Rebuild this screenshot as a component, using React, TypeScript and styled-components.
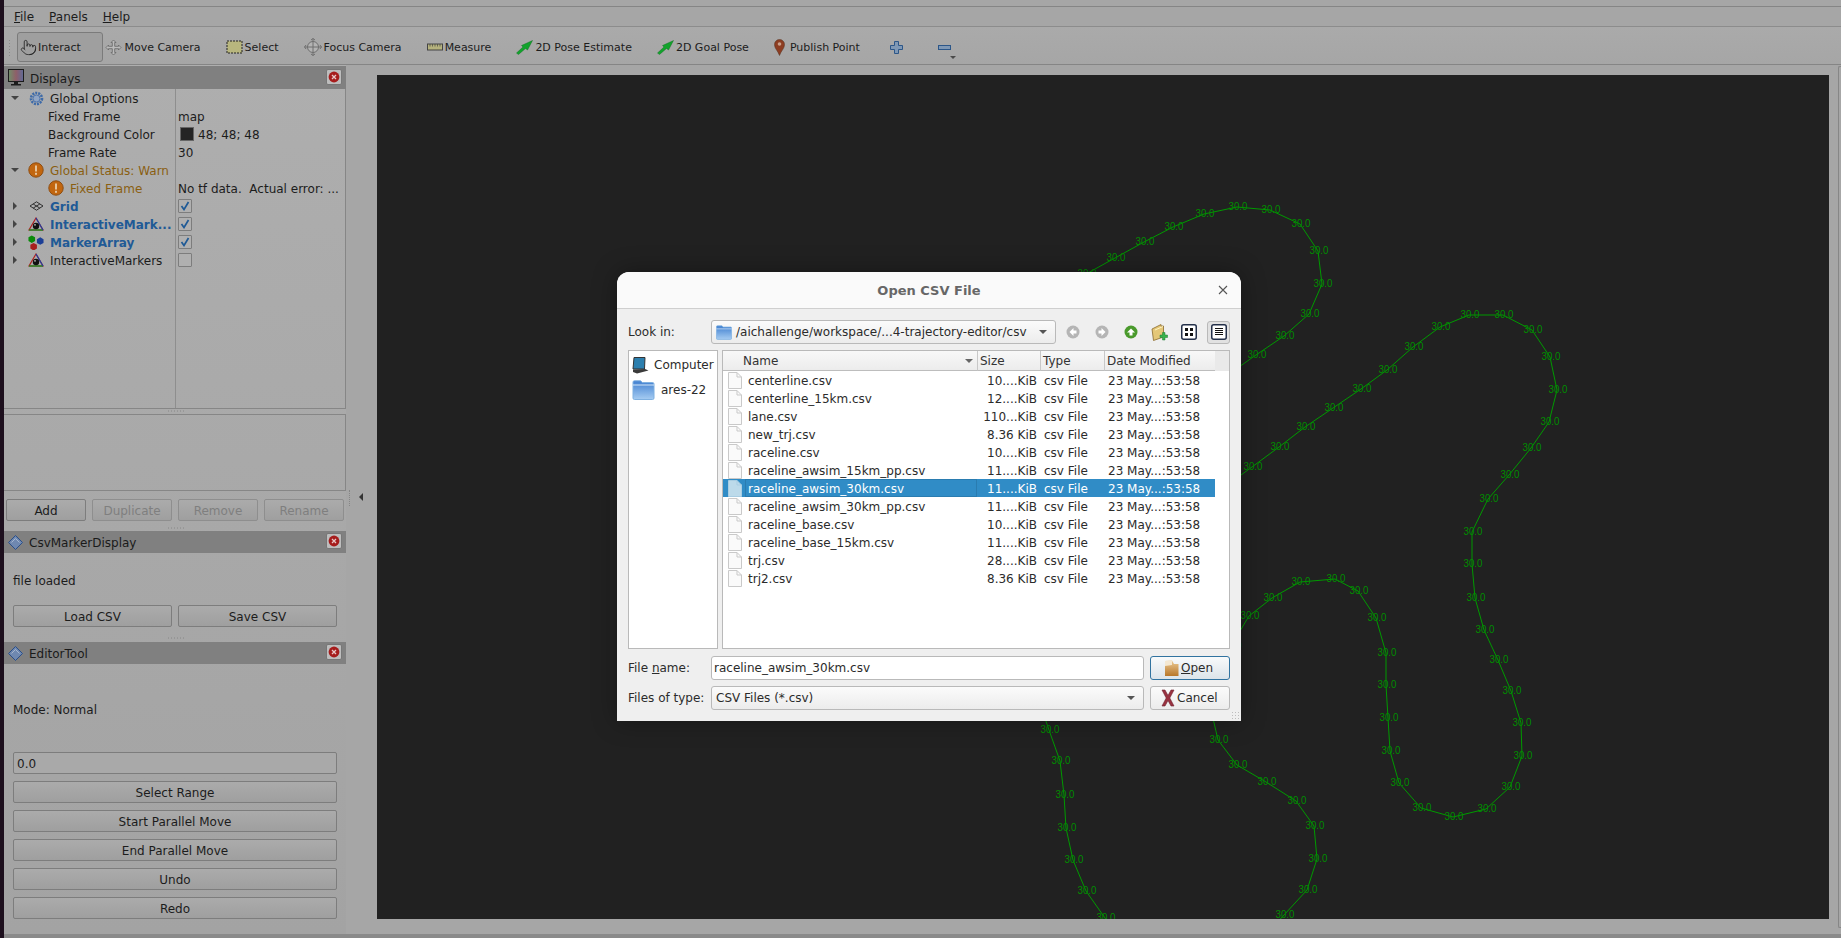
import { createGlobalStyle, styled } from 'styled-components';
import { Pointer } from 'lucide-react';

const GlobalStyle = createGlobalStyle`
  html, body {
    margin: 0;
    padding: 0;
    overflow: hidden;
    font-family: 'DejaVu Sans', sans-serif;
    font-size: 12px;
    color: #1c1c1c;
  }
`;

const Page = styled.div`
  position: relative;
  width: 1841px;
  height: 938px;
  display: flex;
  background: #a6a6a6;
  overflow: hidden;
`;
const DesktopStrip = styled.div`
  width: 4px;
  flex: none;
  background: #1d0f1d;
`;
const Main = styled.div`
  flex: 1;
  display: flex;
  flex-direction: column;
  min-width: 0;
`;
const TopBand = styled.div`
  height: 6px;
  border-bottom: 1px solid #858585;
`;
const MenuBar = styled.div`
  height: 17px;
  padding: 2px 0 0 10px;
  border-bottom: 1px solid #8c8c8c;
  display: flex;
  align-items: center;
  gap: 15px;
`;
const MenuItem = styled.span`
  line-height: 17px;
`;
const Mnemonic = styled.span`
  text-decoration: underline;
  text-underline-offset: 1px;
`;
const ToolBar = styled.div`
  height: 34px;
  padding-top: 3px;
  border-bottom: 1px solid #858585;
  background: linear-gradient(#aaaaaa, #a6a6a6);
  display: flex;
  align-items: center;
  position: relative;
  font-size: 11px;
`;
const Grip = styled.div`
  width: 4px;
  height: 17px;
  margin: 0 5px 0 4px;
  background-image: radial-gradient(#8a8a8a 0.8px, transparent 0.9px);
  background-size: 3px 3px;
`;
const ToolButton = styled.div<{ $active?: boolean }>`
  display: flex;
  align-items: center;
  height: 30px;
  box-sizing: border-box;
  gap: ${(p) => (p.$active ? 1 : 2)}px;
  padding: ${(p) => (p.$active ? '0 21px 0 2px' : '0 12.5px')};
  margin-right: ${(p) => (p.$active ? '-10px' : '0')};
  border: ${(p) => (p.$active ? '1px solid #7b7b7b' : 'none')};
  border-radius: 3px;
  background: ${(p) => (p.$active ? '#9f9f9f' : 'transparent')};
  white-space: nowrap;
`;
const ZoomButton = styled.div`
  width: 48px;
  height: 30px;
  flex: none;
  display: flex;
  align-items: center;
  justify-content: center;
  &:first-of-type {
    margin-left: -3px;
  }
`;
const MenuArrow = styled.div`
  position: absolute;
  left: 946px;
  top: 29px;
  width: 0;
  height: 0;
  border-left: 3px solid transparent;
  border-right: 3px solid transparent;
  border-top: 3px solid #4a4a4a;
`;

const Body = styled.div`
  flex: 1;
  display: flex;
  min-height: 0;
`;
const Sidebar = styled.div`
  width: 342px;
  flex: none;
  display: flex;
  flex-direction: column;
  padding-top: 1px;
  background: linear-gradient(#aeaeae, #a3a3a3);
`;
const PanelTitle = styled.div<{ $height: number }>`
  height: ${(p) => p.$height}px;
  flex: none;
  display: flex;
  align-items: center;
  gap: 6px;
  padding: 0 4px;
  background: #808080;
`;
const PanelName = styled.span`
  flex: 1;
  padding-top: 2px;
  font-size: 12px;
  color: #1a1a1a;
`;
const CloseButton = styled.div`
  width: 16px;
  height: 16px;
  box-sizing: border-box;
  border: 1px solid #777;
  border-radius: 2px;
  background: #bdbdbd;
  display: flex;
  align-items: center;
  justify-content: center;
  margin-top: -2px;
`;
const Tree = styled.div`
  height: 320px;
  flex: none;
  box-sizing: border-box;
  border-right: 1px solid #868686;
  border-bottom: 1px solid #868686;
  position: relative;
`;
const ColumnLine = styled.div`
  position: absolute;
  left: 171px;
  top: 0;
  bottom: 0;
  width: 1px;
  background: #8e8e8e;
`;
const TreeRow = styled.div`
  height: 18px;
  display: flex;
  align-items: center;
`;
const NameCell = styled.div<{ $indent: number }>`
  width: 171px;
  flex: none;
  display: flex;
  align-items: center;
  box-sizing: border-box;
  padding-left: ${(p) => p.$indent}px;
  white-space: nowrap;
  overflow: hidden;
`;
const Toggle = styled.div<{ $open?: boolean }>`
  width: 0;
  height: 0;
  flex: none;
  ${(p) =>
    p.$open
      ? `border-left: 4px solid transparent; border-right: 4px solid transparent; border-top: 4px solid #444; margin: 0 9px 0 7px;`
      : `border-top: 4px solid transparent; border-bottom: 4px solid transparent; border-left: 4px solid #444; margin: 0 11px 0 9px;`}
`;
const RowIcon = styled.div`
  width: 16px;
  height: 16px;
  flex: none;
  display: flex;
  align-items: center;
  justify-content: center;
  margin-right: 6px;
`;
const RowLabel = styled.span<{ $tone?: 'warn' | 'blue' }>`
  padding-top: 2px;
  color: ${(p) => (p.$tone === 'warn' ? '#8a5f12' : p.$tone === 'blue' ? '#1f5a96' : '#1c1c1c')};
  font-weight: ${(p) => (p.$tone === 'blue' ? 700 : 400)};
`;
const ValueCell = styled.div`
  flex: 1;
  min-width: 0;
  display: flex;
  align-items: center;
  gap: 4px;
  padding: 2px 0 0 3px;
  white-space: nowrap;
  overflow: hidden;
`;
const Swatch = styled.div`
  width: 12px;
  height: 12px;
  margin: -2px 0 0 2px;
  background: #242424;
  border: 0.5px solid #666;
`;
const CheckBox = styled.div`
  width: 14px;
  height: 14px;
  margin-top: -2px;
  box-sizing: border-box;
  border: 1px solid #7d7d7d;
  border-radius: 1px;
  background: #b0b0b0;
  display: flex;
  align-items: center;
  justify-content: center;
`;
const SplitDots = styled.div<{ $height: number; $top?: number }>`
  height: ${(p) => p.$height}px;
  flex: none;
  display: flex;
  justify-content: center;
  align-items: flex-start;
  box-sizing: border-box;
  padding-top: ${(p) => p.$top ?? 2}px;
  &::after {
    content: '';
    width: 17px;
    height: 2px;
    background-image: radial-gradient(#878787 0.7px, transparent 0.8px);
    background-size: 3px 2px;
  }
`;
const EmptyBox = styled.div`
  height: 77px;
  flex: none;
  box-sizing: border-box;
  border: 1px solid #868686;
  border-left: none;
  margin-bottom: 8px;
`;
const ButtonRow = styled.div<{ $pad: number }>`
  display: flex;
  gap: 6px;
  padding-left: ${(p) => p.$pad}px;
`;
const QtButton = styled.div<{ $width?: number; $disabled?: boolean }>`
  width: ${(p) => (p.$width ? `${p.$width}px` : 'auto')};
  height: 22px;
  flex: none;
  box-sizing: border-box;
  padding-top: 1px;
  display: flex;
  align-items: center;
  justify-content: center;
  border: 1px solid ${(p) => (p.$disabled ? '#8e8e8e' : '#7d7d7d')};
  border-radius: 2px;
  background: linear-gradient(#ababab, #9f9f9f);
  color: ${(p) => (p.$disabled ? '#7f7f7f' : '#1c1c1c')};
`;
const PanelLabel = styled.div<{ $height: number }>`
  height: ${(p) => p.$height}px;
  flex: none;
  box-sizing: border-box;
  padding: 3px 0 0 9px;
  display: flex;
  align-items: center;
`;
const ToolStack = styled.div`
  display: flex;
  flex-direction: column;
  gap: 7px;
  margin-left: 9px;
  width: 324px;
`;
const PanelInput = styled.div`
  height: 22px;
  box-sizing: border-box;
  border: 1px solid #7d7d7d;
  border-radius: 2px;
  background: #a9a9a9;
  padding: 1px 0 0 3px;
  display: flex;
  align-items: center;
`;
const CollapseStrip = styled.div`
  width: 31px;
  flex: none;
  box-sizing: border-box;
  padding: 425px 0 0 3px;
  display: flex;
  align-items: flex-start;
  gap: 8px;
`;
const DottedLine = styled.div`
  width: 1px;
  height: 16px;
  border-left: 1px dotted #858585;
`;
const CollapseArrow = styled.div`
  margin-top: 3px;
  width: 0;
  height: 0;
  border-top: 4px solid transparent;
  border-bottom: 4px solid transparent;
  border-right: 4px solid #333;
`;
const CanvasArea = styled.div`
  width: 1452px;
  flex: none;
  margin: 10px 0 15px;
  background: #212121;
`;
const TrackSvg = styled.svg`
  display: block;
  width: 1452px;
  height: 844px;
`;
const TrackLabel = styled.text`
  font-family: 'Liberation Sans', sans-serif;
  font-size: 11px;
  fill: #008c00;
`;
const RightDock = styled.div`
  flex: 1;
  padding: 1px 0 6px 9px;
  display: flex;
`;
const RightLine = styled.div`
  width: 2px;
  border-left: 1px solid #868686;
  border-top: 1px solid #868686;
  border-bottom: 1px solid #868686;
  border-radius: 2px 0 0 2px;
`;
const BottomBar = styled.div`
  height: 4px;
  background: #8a8a8a;
`;

const Dialog = styled.div`
  position: absolute;
  left: 617px;
  top: 272px;
  width: 624px;
  height: 449px;
  display: flex;
  flex-direction: column;
  background: #efefef;
  border-radius: 12px 12px 0 0;
  box-shadow: 0 0 24px rgba(0, 0, 0, 0.35);
  color: #2b2b2b;
`;
const DialogTitle = styled.div`
  height: 35px;
  padding-top: 1px;
  flex: none;
  display: flex;
  align-items: center;
  justify-content: center;
  position: relative;
  background: #fafafa;
  border-bottom: 1px solid #cfcfcf;
  border-radius: 12px 12px 0 0;
  font-size: 13px;
  font-weight: 700;
  color: #676767;
`;
const DialogClose = styled.div`
  position: absolute;
  right: 13px;
  top: 9px;
  width: 10px;
  height: 18px;
  display: flex;
  align-items: center;
`;
const DialogBody = styled.div`
  flex: 1;
  display: flex;
  flex-direction: column;
  padding: 11px;
  position: relative;
`;
const DialogRow = styled.div`
  display: flex;
  align-items: center;
  height: 24px;
  flex: none;
`;
const FieldLabel = styled.span`
  width: 83px;
  flex: none;
`;
const ComboBox = styled.div<{ $width: number }>`
  width: ${(p) => p.$width}px;
  height: 24px;
  flex: none;
  box-sizing: border-box;
  display: flex;
  align-items: center;
  gap: 4px;
  padding: 0 8px 0 4px;
  border: 1px solid #b9b9b9;
  border-radius: 3px;
  background: linear-gradient(#fbfbfb, #ececec);
`;
const ComboText = styled.span`
  flex: 1;
  white-space: nowrap;
`;
const ComboArrow = styled.div`
  width: 0;
  height: 0;
  border-left: 4px solid transparent;
  border-right: 4px solid transparent;
  border-top: 4px solid #555;
`;
const NavIcons = styled.div`
  flex: 1;
  display: flex;
  align-items: center;
  justify-content: flex-end;
`;
const NavSlot = styled.div<{ $width: number; $pressed?: boolean }>`
  width: ${(p) => p.$width}px;
  height: 23px;
  flex: none;
  box-sizing: border-box;
  display: flex;
  align-items: center;
  justify-content: center;
  margin-left: ${(p) => (p.$pressed ? 4 : 0)}px;
  border: ${(p) => (p.$pressed ? '1px solid #b9b9b9' : 'none')};
  border-radius: 3px;
  background: ${(p) => (p.$pressed ? '#e1e1e1' : 'transparent')};
`;
const Panes = styled.div`
  height: 299px;
  flex: none;
  display: flex;
  gap: 4px;
  margin: 6px 0 7px;
`;
const Places = styled.div`
  width: 90px;
  flex: none;
  box-sizing: border-box;
  border: 1px solid #b9b9b9;
  background: #fff;
  padding-top: 2px;
`;
const PlaceRow = styled.div<{ $height: number; $gap: number }>`
  height: ${(p) => p.$height}px;
  display: flex;
  align-items: center;
  padding-left: 3px;
  gap: ${(p) => p.$gap}px;
  white-space: nowrap;
`;
const FileList = styled.div`
  flex: 1;
  box-sizing: border-box;
  border: 1px solid #b9b9b9;
  background: #fff;
`;
const HeaderRow = styled.div`
  height: 20px;
  display: flex;
  background: #e9e9e9;
`;
const HeaderCell = styled.div<{ $width: number }>`
  width: ${(p) => p.$width}px;
  flex: none;
  box-sizing: border-box;
  display: flex;
  align-items: center;
  padding-left: 2px;
  background: linear-gradient(#f8f8f8, #ececec);
  border-right: 1px solid #c8c8c8;
  border-bottom: 1px solid #bdbdbd;
  color: #333;
  &:first-child {
    padding-left: 20px;
  }
  &:nth-child(4) {
    border-right: none;
  }
`;
const SortArrow = styled.div`
  margin-left: auto;
  margin-right: 4px;
  width: 0;
  height: 0;
  border-left: 4px solid transparent;
  border-right: 4px solid transparent;
  border-top: 4px solid #666;
`;
const FileRow = styled.div<{ $selected?: boolean }>`
  width: 492px;
  height: 18px;
  display: flex;
  align-items: center;
  white-space: nowrap;
  background: ${(p) => (p.$selected ? '#308cc6' : 'transparent')};
  color: ${(p) => (p.$selected ? '#fff' : '#2b2b2b')};
`;
const FileName = styled.div<{ $selected?: boolean }>`
  width: 254px;
  height: 18px;
  flex: none;
  box-sizing: border-box;
  display: flex;
  align-items: center;
  gap: 6px;
  padding-left: 5px;
  position: relative;
  &::after {
    content: '';
    display: ${(p) => (p.$selected ? 'block' : 'none')};
    position: absolute;
    left: 22px;
    right: 0;
    top: 0;
    bottom: 0;
    border: 1px solid #2a7cb0;
  }
`;
const FileNameText = styled.span`
  padding-top: 2px;
`;
const FileSize = styled.div`
  width: 60px;
  flex: none;
  padding-top: 2px;
  text-align: right;
`;
const FileType = styled.div`
  width: 64px;
  flex: none;
  padding: 2px 0 0 7px;
  box-sizing: border-box;
`;
const FileDate = styled.div`
  padding: 2px 0 0 7px;
`;
const NameInput = styled.div`
  width: 433px;
  height: 24px;
  flex: none;
  box-sizing: border-box;
  border: 1px solid #b9b9b9;
  border-radius: 3px;
  background: #fff;
  display: flex;
  align-items: center;
  padding-left: 2px;
`;
const DialogButton = styled.div<{ $default?: boolean }>`
  width: 80px;
  height: 24px;
  margin-left: 6px;
  flex: none;
  box-sizing: border-box;
  display: flex;
  align-items: center;
  gap: 2px;
  padding-left: ${(p) => (p.$default ? 13 : 10)}px;
  border: 1px solid ${(p) => (p.$default ? '#3173a0' : '#b9b9b9')};
  border-radius: 3px;
  background: ${(p) => (p.$default ? 'linear-gradient(#f8fafb, #dce4ea)' : 'linear-gradient(#fbfbfb, #ececec)')};
`;
const RowGap = styled.div`
  height: 6px;
  flex: none;
`;
const ResizeGrip = styled.div`
  position: absolute;
  right: 1px;
  bottom: 1px;
  width: 9px;
  height: 9px;
  background-image: radial-gradient(#bdbdbd 0.7px, transparent 0.8px);
  background-size: 3px 3px;
`;

const HandIcon = () => <Pointer size={17} strokeWidth={1.2} color="#222" />;
const MoveIcon = () => (
  <svg width="17" height="17" viewBox="0 0 17 17">
    <path
      d="M8.5 1 L11 3.5 H9.7 V7.3 H13.5 V6 L16 8.5 L13.5 11 V9.7 H9.7 V13.5 H11 L8.5 16 L6 13.5 H7.3 V9.7 H3.5 V11 L1 8.5 L3.5 6 V7.3 H7.3 V3.5 H6 Z"
      fill="#bbb"
      stroke="#666"
      strokeWidth="0.8"
    />
  </svg>
);
const SelectIcon = () => (
  <svg width="17" height="17" viewBox="0 0 17 17">
    <rect x="1" y="2" width="15" height="12" fill="#b8b67e" stroke="#222" strokeWidth="1" strokeDasharray="2 1" />
  </svg>
);
const FocusIcon = () => (
  <svg width="18" height="18" viewBox="0 0 18 18" fill="none" stroke="#6f6f6f">
    <circle cx="9" cy="9" r="5.5" fill="#b3b3b3" />
    <path d="M9 0.5 V17.5 M0.5 9 H17.5 M7 2 L9 0.5 L11 2 M7 16 L9 17.5 L11 16 M2 7 L0.5 9 L2 11 M16 7 L17.5 9 L16 11" />
  </svg>
);
const RulerIcon = () => (
  <svg width="16" height="8" viewBox="0 0 16 8">
    <rect x="0.5" y="1" width="15" height="6" fill="#b5b27d" stroke="#444" />
    <path d="M3 1 V3.5 M5.5 1 V3.5 M8 1 V3.5 M10.5 1 V3.5 M13 1 V3.5" stroke="#444" strokeWidth="0.7" />
  </svg>
);
const PoseIcon = () => (
  <svg width="17" height="15" viewBox="0 0 17 15">
    <path d="M0.5 13 L7 7 L5.5 5.5 L16.5 0.5 L11.5 10 L9.5 8.5 L2.5 14.5 Z" fill="#12a32c" stroke="#0b6b1c" strokeWidth="0.4" />
  </svg>
);
const PinIcon = () => (
  <svg width="14" height="17" viewBox="0 0 14 17">
    <path d="M5.5 16.5 C4 12 0.5 9.5 0.5 5.5 A5 5 0 0 1 10.5 5.5 C10.5 9.5 7 12 5.5 16.5 Z" fill="#8d3d22" stroke="#55301f" strokeWidth="0.5" />
    <circle cx="5.5" cy="5" r="1.8" fill="#c9a08a" />
  </svg>
);
const PlusIcon = () => (
  <svg width="13" height="13" viewBox="0 0 13 13">
    <path d="M4.5 0.5 H8.5 V4.5 H12.5 V8.5 H8.5 V12.5 H4.5 V8.5 H0.5 V4.5 H4.5 Z" fill="#7f98b5" stroke="#2c5688" />
  </svg>
);
const MinusIcon = () => (
  <svg width="13" height="13" viewBox="0 0 13 13">
    <rect x="0.5" y="4.5" width="12" height="4" fill="#7f98b5" stroke="#2c5688" />
  </svg>
);
const MonitorIcon = () => (
  <svg width="16" height="17" viewBox="0 0 16 17">
    <defs>
      <linearGradient id="screenBars" x1="0" x2="1">
        <stop offset="0" stopColor="#6f8f6a" />
        <stop offset="0.5" stopColor="#8f5f68" />
        <stop offset="1" stopColor="#5f6a98" />
      </linearGradient>
    </defs>
    <rect x="0.5" y="0.5" width="15" height="12" fill="url(#screenBars)" stroke="#1c1c1c" />
    <path d="M6 13 H10 V15 H13 V16.5 H3 V15 H6 Z" fill="#1c1c1c" />
  </svg>
);
const GearIcon = () => (
  <svg width="15" height="15" viewBox="0 0 15 15">
    <circle cx="7.5" cy="7.5" r="5.5" fill="none" stroke="#3d6aa8" strokeWidth="2.6" strokeDasharray="2 1" />
    <circle cx="7.5" cy="7.5" r="3.5" fill="#90a5c4" stroke="#3d6aa8" strokeWidth="0.8" />
  </svg>
);
const WarnIcon = () => (
  <svg width="16" height="16" viewBox="0 0 16 16">
    <circle cx="8" cy="8" r="7.2" fill="#c2660f" stroke="#8f4d10" />
    <rect x="7" y="3.5" width="2" height="6" fill="#e6c49a" />
    <rect x="7" y="10.8" width="2" height="2" fill="#e6c49a" />
  </svg>
);
const GridIcon = () => (
  <svg width="15" height="10" viewBox="0 0 15 10" fill="none" stroke="#222" strokeWidth="0.9">
    <path d="M7.5 0.8 L14 5 L7.5 9.2 L1 5 Z M4.2 3 L10.8 7.1 M10.8 3 L4.2 7.1" />
  </svg>
);
const MarkerIcon = () => (
  <svg width="16" height="15" viewBox="0 0 16 15">
    <path d="M8 1 L15 13 H1 Z" fill="none" stroke="#b02020" strokeWidth="1.2" />
    <path d="M1 13 H15" stroke="#1a8a20" strokeWidth="1.4" />
    <path d="M8 1 L15 13" stroke="#1f3fa0" strokeWidth="1.2" />
    <circle cx="8" cy="9" r="3.2" fill="#111" />
    <circle cx="7" cy="7.8" r="0.9" fill="#bbb" />
  </svg>
);
const CubesIcon = () => (
  <svg width="17" height="17" viewBox="0 0 17 17">
    <path d="M0.5 3 L4 1 L7.5 3 V7 L4 9 L0.5 7 Z" fill="#0a8a0a" />
    <path d="M9.5 5 L13 3 L16.5 5 V9 L13 11 L9.5 9 Z" fill="#1c3f96" />
    <path d="M2.5 11 L6 9 L9.5 11 V15 L6 17 L2.5 15 Z" fill="#a81f1f" />
  </svg>
);
const DiamondIcon = () => (
  <svg width="15" height="15" viewBox="0 0 15 15">
    <path d="M7.5 0.5 L14.5 7.5 L7.5 14.5 L0.5 7.5 Z" fill="#6f88b0" stroke="#2b4f88" />
    <path d="M3.5 7.5 L7.5 3.5 L11.5 7.5" fill="none" stroke="#a5b6cf" />
  </svg>
);
const RedClose = () => (
  <svg width="12" height="12" viewBox="0 0 12 12">
    <circle cx="6" cy="6" r="5.4" fill="#a61c1c" />
    <path d="M4 4 L8 8 M8 4 L4 8" stroke="#e8c8c8" strokeWidth="1.3" />
  </svg>
);
const CheckMark = () => (
  <svg width="10" height="10" viewBox="0 0 10 10">
    <path d="M1.5 5 L4 8.5 L8.5 1" fill="none" stroke="#1f5a96" strokeWidth="1.7" />
  </svg>
);
const FileIcon = ({ selected }: { selected?: boolean }) => (
  <svg width="14" height="17" viewBox="0 0 14 17" style={{ flex: 'none' }}>
    <path
      d="M0.5 0.5 H9 L13.5 5 V16.5 H0.5 Z"
      fill={selected ? '#bcdaea' : '#fafafa'}
      stroke={selected ? '#a8cde2' : '#c9c9c9'}
    />
    <path d="M9 0.5 V5 H13.5" fill="none" stroke={selected ? '#a8cde2' : '#c9c9c9'} />
  </svg>
);
const FolderBlue = ({ width, height }: { width: number; height: number }) => (
  <svg width={width} height={height} viewBox="0 0 22 20" style={{ flex: 'none' }}>
    <defs>
      <linearGradient id="blueFolder" x1="0" x2="0" y1="0" y2="1">
        <stop offset="0" stopColor="#3f7fd0" />
        <stop offset="1" stopColor="#a6ccf2" />
      </linearGradient>
    </defs>
    <path d="M0.5 2 Q0.5 0.8 2 0.8 H8 L10 2.5 H20 Q21.5 2.5 21.5 4 V18 Q21.5 19.5 20 19.5 H2 Q0.5 19.5 0.5 18 Z" fill="url(#blueFolder)" stroke="#7fb0e0" />
    <path d="M0.5 5 H21.5" stroke="#d4e6f8" />
  </svg>
);
const ComputerIcon = () => (
  <svg width="17" height="17" viewBox="0 0 17 17" style={{ flex: 'none' }}>
    <path d="M2 0.5 H13 L12.5 12 H1 Z" fill="#2c7fae" stroke="#333" />
    <path d="M1 12.5 L13 12 L16.5 13.5 L5 16.5 L1 15 Z" fill="#3a3a3a" />
  </svg>
);
const NavCircle = ({ color, flip, up }: { color: string; flip?: boolean; up?: boolean }) => (
  <svg width="14" height="14" viewBox="0 0 14 14">
    <circle cx="7" cy="7" r="6.5" fill={color} />
    <path
      d="M7.5 3 L3.5 7 L7.5 11 V8.5 H10.5 V5.5 H7.5 Z"
      fill="#fff"
      transform={up ? 'rotate(90 7 7)' : flip ? 'rotate(180 7 7)' : undefined}
    />
  </svg>
);
const NewFolderIcon = () => (
  <svg width="17" height="19" viewBox="0 0 17 19">
    <path d="M1 6 L10 1.5 V3 L12.5 3 V14 L2.5 17.5 Z" fill="#e4c778" stroke="#8a6a2c" strokeWidth="0.8" />
    <path d="M4 7 L12 3.5" stroke="#fff3c4" />
    <path d="M11.5 9.5 H14 V12 H16.5 V14.5 H14 V17 H11.5 V14.5 H9 V12 H11.5 Z" fill="#38b24c" stroke="#1d7a31" strokeWidth="0.5" />
  </svg>
);
const GridViewIcon = () => (
  <svg width="16" height="16" viewBox="0 0 16 16">
    <rect x="0.75" y="0.75" width="14.5" height="14.5" rx="2" fill="#fff" stroke="#24304a" strokeWidth="1.5" />
    <rect x="4" y="4" width="3" height="3" fill="#111" />
    <rect x="9" y="4" width="3" height="3" fill="#111" />
    <rect x="4" y="9" width="3" height="3" fill="#111" />
    <rect x="9" y="9" width="3" height="3" fill="#111" />
  </svg>
);
const ListViewIcon = () => (
  <svg width="16" height="16" viewBox="0 0 16 16">
    <rect x="0.75" y="0.75" width="14.5" height="14.5" rx="2" fill="#fff" stroke="#24304a" strokeWidth="1.5" />
    <path d="M4 4.5 H12 M4 6.5 H12 M4 8.5 H12 M4 10.5 H12" stroke="#111" strokeWidth="1" />
  </svg>
);
const OpenFolderIcon = () => (
  <svg width="15" height="17" viewBox="0 0 15 17" style={{ flex: 'none' }}>
    <defs>
      <linearGradient id="openFolder" x1="0" x2="0" y1="0" y2="1">
        <stop offset="0" stopColor="#eccb95" />
        <stop offset="1" stopColor="#b8772a" />
      </linearGradient>
    </defs>
    <path d="M1 1 L8 0.5 L10 4 H14.5 V16 H1 Z" fill="url(#openFolder)" />
    <path d="M1 1 L8 0.5 V5 L1 6 Z" fill="#f4e8d2" />
  </svg>
);
const CancelIcon = () => (
  <svg width="14" height="18" viewBox="0 0 14 18" style={{ flex: 'none' }}>
    <path d="M1 1 L4 1 L7 6.5 L10 1 H13 L8.8 9 L13 17 H10 L7 11.5 L4 17 H1 L5.2 9 Z" fill="#9a3240" stroke="#6d2430" strokeWidth="0.6" />
  </svg>
);

const toolItems = [
  { label: 'Move Camera', icon: <MoveIcon /> },
  { label: 'Select', icon: <SelectIcon /> },
  { label: 'Focus Camera', icon: <FocusIcon /> },
  { label: 'Measure', icon: <RulerIcon /> },
  { label: '2D Pose Estimate', icon: <PoseIcon /> },
  { label: '2D Goal Pose', icon: <PoseIcon /> },
  { label: 'Publish Point', icon: <PinIcon /> },
];

const files = [
  ['centerline.csv', '10....KiB'],
  ['centerline_15km.csv', '12....KiB'],
  ['lane.csv', '110...KiB'],
  ['new_trj.csv', '8.36 KiB'],
  ['raceline.csv', '10....KiB'],
  ['raceline_awsim_15km_pp.csv', '11....KiB'],
  ['raceline_awsim_30km.csv', '11....KiB'],
  ['raceline_awsim_30km_pp.csv', '11....KiB'],
  ['raceline_base.csv', '10....KiB'],
  ['raceline_base_15km.csv', '11....KiB'],
  ['trj.csv', '28....KiB'],
  ['trj2.csv', '8.36 KiB'],
];

// label centres read off the reference, in page pixels; the first and last point of
// each track lie under the dialog or past the canvas edge and carry no label
const tracks: number[][][] = [
  [
    [1060, 290], [1087, 273], [1116, 257], [1145, 241], [1174, 226], [1205, 213], [1238, 206], [1271, 209],
    [1301, 223], [1319, 250], [1323, 283], [1310, 313], [1285, 335], [1257, 354], [1220, 380],
  ],
  [
    [1220, 490], [1253, 466], [1280, 446], [1306, 426], [1334, 407], [1362, 388], [1388, 369], [1414, 346],
    [1441, 326], [1470, 314], [1504, 314], [1533, 329], [1551, 356], [1558, 389], [1550, 421], [1532, 447],
    [1510, 474], [1489, 498], [1473, 531], [1473, 563], [1476, 597], [1485, 629], [1499, 659], [1512, 690],
    [1522, 722], [1523, 755], [1511, 786], [1487, 808], [1454, 816], [1422, 807], [1400, 782], [1391, 750],
    [1389, 717], [1387, 684], [1387, 652], [1377, 617], [1359, 590], [1336, 578], [1301, 581], [1273, 597],
    [1250, 615], [1232, 645], [1225, 670],
  ],
  [
    [1210, 700], [1219, 739], [1238, 764], [1267, 781], [1297, 800], [1315, 825], [1318, 858], [1308, 889],
    [1285, 914], [1275, 925],
  ],
  [
    [1040, 700], [1050, 729], [1061, 760], [1065, 794], [1067, 827], [1074, 859], [1087, 890], [1106, 917],
    [1112, 925],
  ],
];

const Track = ({ points }: { points: number[][] }) => (
  <>
    <polyline
      points={points.map(([x, y]) => `${x - 1},${y + 1}`).join(' ')}
      fill="none"
      stroke="#009a00"
      strokeWidth="1"
    />
    {points.slice(1, -1).map(([x, y], i) => (
      <TrackLabel key={i} x={x - 9.5} y={y + 4} textLength={19} lengthAdjust="spacingAndGlyphs">
        30.0
      </TrackLabel>
    ))}
  </>
);

function App() {
  return (
    <Page>
      <GlobalStyle />
      <DesktopStrip />
      <Main>
        <TopBand />
        <MenuBar>
          <MenuItem><Mnemonic>F</Mnemonic>ile</MenuItem>
          <MenuItem><Mnemonic>P</Mnemonic>anels</MenuItem>
          <MenuItem><Mnemonic>H</Mnemonic>elp</MenuItem>
        </MenuBar>
        <ToolBar>
          <Grip />
          <ToolButton $active>
            <HandIcon />
            Interact
          </ToolButton>
          {toolItems.map((t) => (
            <ToolButton key={t.label}>
              {t.icon}
              {t.label}
            </ToolButton>
          ))}
          <ZoomButton><PlusIcon /></ZoomButton>
          <ZoomButton><MinusIcon /></ZoomButton>
          <MenuArrow />
        </ToolBar>
        <Body>
          <Sidebar>
            <PanelTitle $height={23}>
              <MonitorIcon />
              <PanelName>Displays</PanelName>
              <CloseButton><RedClose /></CloseButton>
            </PanelTitle>
            <Tree>
              <ColumnLine />
              <TreeRow>
                <NameCell $indent={0}>
                  <Toggle $open />
                  <RowIcon><GearIcon /></RowIcon>
                  <RowLabel>Global Options</RowLabel>
                </NameCell>
                <ValueCell />
              </TreeRow>
              <TreeRow>
                <NameCell $indent={44}><RowLabel>Fixed Frame</RowLabel></NameCell>
                <ValueCell>map</ValueCell>
              </TreeRow>
              <TreeRow>
                <NameCell $indent={44}><RowLabel>Background Color</RowLabel></NameCell>
                <ValueCell><Swatch />48; 48; 48</ValueCell>
              </TreeRow>
              <TreeRow>
                <NameCell $indent={44}><RowLabel>Frame Rate</RowLabel></NameCell>
                <ValueCell>30</ValueCell>
              </TreeRow>
              <TreeRow>
                <NameCell $indent={0}>
                  <Toggle $open />
                  <RowIcon><WarnIcon /></RowIcon>
                  <RowLabel $tone="warn">Global Status: Warn</RowLabel>
                </NameCell>
                <ValueCell />
              </TreeRow>
              <TreeRow>
                <NameCell $indent={44}>
                  <RowIcon><WarnIcon /></RowIcon>
                  <RowLabel $tone="warn">Fixed Frame</RowLabel>
                </NameCell>
                <ValueCell>No tf data.&nbsp; Actual error: ...</ValueCell>
              </TreeRow>
              <TreeRow>
                <NameCell $indent={0}>
                  <Toggle />
                  <RowIcon><GridIcon /></RowIcon>
                  <RowLabel $tone="blue">Grid</RowLabel>
                </NameCell>
                <ValueCell><CheckBox><CheckMark /></CheckBox></ValueCell>
              </TreeRow>
              <TreeRow>
                <NameCell $indent={0}>
                  <Toggle />
                  <RowIcon><MarkerIcon /></RowIcon>
                  <RowLabel $tone="blue">InteractiveMark...</RowLabel>
                </NameCell>
                <ValueCell><CheckBox><CheckMark /></CheckBox></ValueCell>
              </TreeRow>
              <TreeRow>
                <NameCell $indent={0}>
                  <Toggle />
                  <RowIcon><CubesIcon /></RowIcon>
                  <RowLabel $tone="blue">MarkerArray</RowLabel>
                </NameCell>
                <ValueCell><CheckBox><CheckMark /></CheckBox></ValueCell>
              </TreeRow>
              <TreeRow>
                <NameCell $indent={0}>
                  <Toggle />
                  <RowIcon><MarkerIcon /></RowIcon>
                  <RowLabel>InteractiveMarkers</RowLabel>
                </NameCell>
                <ValueCell><CheckBox /></ValueCell>
              </TreeRow>
            </Tree>
            <SplitDots $height={5} $top={1} />
            <EmptyBox />
            <ButtonRow $pad={2}>
              <QtButton $width={80}>Add</QtButton>
              <QtButton $width={80} $disabled>Duplicate</QtButton>
              <QtButton $width={80} $disabled>Remove</QtButton>
              <QtButton $width={80} $disabled>Rename</QtButton>
            </ButtonRow>
            <SplitDots $height={10} $top={6} />
            <PanelTitle $height={22}>
              <DiamondIcon />
              <PanelName>CsvMarkerDisplay</PanelName>
              <CloseButton><RedClose /></CloseButton>
            </PanelTitle>
            <PanelLabel $height={52}>file loaded</PanelLabel>
            <ButtonRow $pad={9}>
              <QtButton $width={159}>Load CSV</QtButton>
              <QtButton $width={159}>Save CSV</QtButton>
            </ButtonRow>
            <SplitDots $height={15} $top={10} />
            <PanelTitle $height={22}>
              <DiamondIcon />
              <PanelName>EditorTool</PanelName>
              <CloseButton><RedClose /></CloseButton>
            </PanelTitle>
            <PanelLabel $height={88}>Mode: Normal</PanelLabel>
            <ToolStack>
              <PanelInput>0.0</PanelInput>
              <QtButton>Select Range</QtButton>
              <QtButton>Start Parallel Move</QtButton>
              <QtButton>End Parallel Move</QtButton>
              <QtButton>Undo</QtButton>
              <QtButton>Redo</QtButton>
            </ToolStack>
          </Sidebar>
          <CollapseStrip>
            <DottedLine />
            <CollapseArrow />
          </CollapseStrip>
          <CanvasArea>
            <TrackSvg viewBox="377 75 1452 844">
              {tracks.map((points, i) => (
                <Track key={i} points={points} />
              ))}
            </TrackSvg>
          </CanvasArea>
          <RightDock>
            <RightLine />
          </RightDock>
        </Body>
        <BottomBar />
      </Main>

      <Dialog>
        <DialogTitle>
          Open CSV File
          <DialogClose>
            <svg width="10" height="10" viewBox="0 0 10 10">
              <path d="M1 1 L9 9 M9 1 L1 9" stroke="#555" strokeWidth="1.1" />
            </svg>
          </DialogClose>
        </DialogTitle>
        <DialogBody>
          <DialogRow>
            <FieldLabel>Look in:</FieldLabel>
            <ComboBox $width={345}>
              <FolderBlue width={16} height={15} />
              <ComboText>/aichallenge/workspace/...4-trajectory-editor/csv</ComboText>
              <ComboArrow />
            </ComboBox>
            <NavIcons>
              <NavSlot $width={29}><NavCircle color="#b5b5b5" /></NavSlot>
              <NavSlot $width={29}><NavCircle color="#b5b5b5" flip /></NavSlot>
              <NavSlot $width={29}><NavCircle color="#4a9a2c" up /></NavSlot>
              <NavSlot $width={29}><NewFolderIcon /></NavSlot>
              <NavSlot $width={29}><GridViewIcon /></NavSlot>
              <NavSlot $width={23} $pressed><ListViewIcon /></NavSlot>
            </NavIcons>
          </DialogRow>
          <Panes>
            <Places>
              <PlaceRow $height={24} $gap={5}>
                <ComputerIcon />
                Computer
              </PlaceRow>
              <PlaceRow $height={26} $gap={6}>
                <FolderBlue width={23} height={20} />
                ares-22
              </PlaceRow>
            </Places>
            <FileList>
              <HeaderRow>
                <HeaderCell $width={255}>Name<SortArrow /></HeaderCell>
                <HeaderCell $width={63}>Size</HeaderCell>
                <HeaderCell $width={64}>Type</HeaderCell>
                <HeaderCell $width={110}>Date Modified</HeaderCell>
              </HeaderRow>
              {files.map(([name, size]) => {
                const selected = name === 'raceline_awsim_30km.csv';
                return (
                  <FileRow key={name} $selected={selected}>
                    <FileName $selected={selected}>
                      <FileIcon selected={selected} />
                      <FileNameText>{name}</FileNameText>
                    </FileName>
                    <FileSize>{size}</FileSize>
                    <FileType>csv File</FileType>
                    <FileDate>23 May...:53:58</FileDate>
                  </FileRow>
                );
              })}
            </FileList>
          </Panes>
          <DialogRow>
            <FieldLabel>File <Mnemonic>n</Mnemonic>ame:</FieldLabel>
            <NameInput>raceline_awsim_30km.csv</NameInput>
            <DialogButton $default>
              <OpenFolderIcon />
              <span><Mnemonic>O</Mnemonic>pen</span>
            </DialogButton>
          </DialogRow>
          <RowGap />
          <DialogRow>
            <FieldLabel>Files of type:</FieldLabel>
            <ComboBox $width={433}>
              <ComboText>CSV Files (*.csv)</ComboText>
              <ComboArrow />
            </ComboBox>
            <DialogButton>
              <CancelIcon />
              Cancel
            </DialogButton>
          </DialogRow>
          <ResizeGrip />
        </DialogBody>
      </Dialog>
    </Page>
  );
}

export default App;
